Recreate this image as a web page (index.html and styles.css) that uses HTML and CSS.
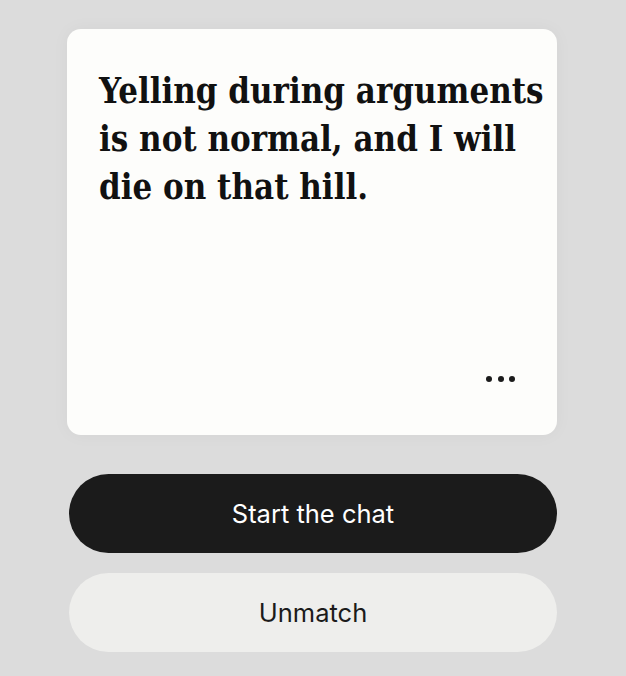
FILE: index.html
```html
<!DOCTYPE html>
<html>
	<head>
		<meta charset="UTF-8" />
		<title>Match</title>
		<link rel="stylesheet" href="styles.css">
	</head>
	<body>
		<div id="match-screen">
			<div id="prompt-card">
				<p id="prompt-text">Yelling during arguments is not normal, and I will die on that hill.</p>
				<div id="card-footer">
					<span class="more-dots" aria-label="More options">
						<i></i><i></i><i></i>
					</span>
				</div>
			</div>
			<button class="pill-button" id="start-chat">Start the chat</button>
			<button class="pill-button" id="unmatch">Unmatch</button>
		</div>
	</body>
</html>
```

FILE: styles.css
```css
body {
	margin: 0;
	background-color: #dcdcdc;
	font-family: Inter, 'Liberation Sans', sans-serif;
}
#match-screen {
	width: 490px;
	padding-top: 29px;
	padding-left: 67px;
	display: flex;
	flex-direction: column;
}
#prompt-card {
	height: 406px;
	box-sizing: border-box;
	background-color: #fdfdfb;
	border-radius: 14px;
	padding: 38px 6px 53px 32px;
	display: flex;
	flex-direction: column;
	justify-content: space-between;
	box-shadow: 0 0 18px rgba(0, 0, 0, 0.04);
}
#prompt-text {
	margin: 0;
	font-family: 'DejaVu Serif Condensed', 'DejaVu Serif', serif;
	font-stretch: condensed;
	font-weight: bold;
	font-size: 34.5px;
	line-height: 48px;
	color: #111;
}
#card-footer {
	display: flex;
	justify-content: flex-end;
	padding-right: 36px;
}
.more-dots {
	display: flex;
	gap: 5.5px;
}
.more-dots i {
	width: 6px;
	height: 6px;
	border-radius: 50%;
	background-color: #1b1b1b;
}
.pill-button {
	margin-left: 2px;
	width: 488px;
	height: 79px;
	border: none;
	border-radius: 40px;
	font-family: Inter, 'Liberation Sans', sans-serif;
	font-size: 25.5px;
	padding: 0;
}
#start-chat {
	margin-top: 39px;
	background-color: #1b1b1b;
	color: #fff;
}
#unmatch {
	margin-top: 20px;
	background-color: #eeeeec;
	color: #1b1b1b;
}
```
